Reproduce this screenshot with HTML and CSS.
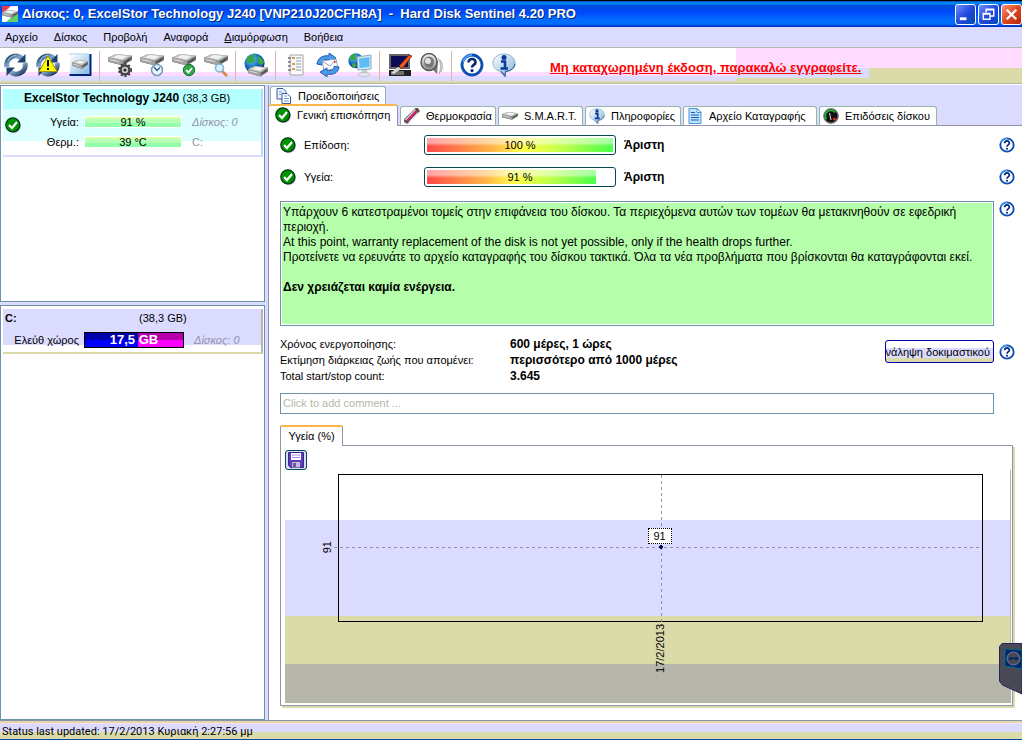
FILE: index.html
```html
<!DOCTYPE html>
<html lang="el">
<head>
    <meta charset="UTF-8">
    <title>Hard Disk Sentinel</title>
    <link rel="stylesheet" href="styles.css">
</head>
<body>
<!-- icons -->
<svg class="defs" width="0" height="0">
    <defs>
        <linearGradient id="steel" x1="0" y1="0" x2="1" y2="1">
            <stop offset="0" stop-color="#1c3f68"/><stop offset=".45" stop-color="#7fa8cc"/><stop offset="1" stop-color="#12294a"/>
        </linearGradient>
        <linearGradient id="metal" x1="0" y1="0" x2="0" y2="1">
            <stop offset="0" stop-color="#f4f4f4"/><stop offset="1" stop-color="#8c8c8c"/>
        </linearGradient>
        <radialGradient id="earth" cx=".35" cy=".3" r=".8">
            <stop offset="0" stop-color="#6cd0ff"/><stop offset=".5" stop-color="#1668c0"/><stop offset="1" stop-color="#062a66"/>
        </radialGradient>
        <linearGradient id="bubble" x1="0" y1="0" x2="1" y2="1">
            <stop offset="0" stop-color="#fff"/><stop offset="1" stop-color="#7fb4dc"/>
        </linearGradient>
        <symbol id="ok" viewBox="0 0 16 16">
            <circle cx="8.8" cy="8.8" r="7" fill="#8a8aa0"/>
            <circle cx="7.8" cy="7.8" r="7" fill="#009200" stroke="#003a10" stroke-width="1.2"/>
            <path d="M4 8l3 3 5-6" fill="none" stroke="#fff" stroke-width="2.2"/>
        </symbol>
        <symbol id="help" viewBox="0 0 24 24">
            <circle cx="12" cy="12" r="10" fill="#fff" stroke="#0b4db0" stroke-width="2.8"/>
            <path d="M3 9a9.5 9.5 0 0 1 9-7" fill="none" stroke="#4aa0ff" stroke-width="2"/>
            <path d="M8.5 9.5c0-5 7.5-4.500 7 0c-.3 2.400-3.500 2.500-3.500 5" fill="none" stroke="#002a7a" stroke-width="2.6"/>
            <circle cx="12" cy="17.600" r="1.600" fill="#002a7a"/>
        </symbol>
        <symbol id="info" viewBox="0 0 24 24">
            <path d="M12 1C5.500 1 1 5 1 10s4 8 8 8.500l4 5 .5-5C19 18 23 15 23 10S18.500 1 12 1z" fill="url(#bubble)" stroke="#8fb0cc"/>
            <path d="M9 18.500l4 4.500.5-4.500c6-.5 9-4 9.300-7.500" fill="none" stroke="#39699a" stroke-width="1.300"/>
            <circle cx="12" cy="4.500" r="2.500" fill="#0a3a9a"/>
            <path d="M9 8.500h4v7M8.500 15.500h7.500" fill="none" stroke="#0a3a9a" stroke-width="2.600"/>
        </symbol>
        <symbol id="drive" viewBox="0 0 24 14" preserveAspectRatio="none">
            <path d="M0 4L8 0l16 2v5l-9 6.500L0 9z" fill="#6f6f6f"/>
            <path d="M0 4L8 0l16 2-9 6z" fill="#c8c8c8"/>
            <path d="M0 4l15 4v5.500L0 9z" fill="#a0a0a0"/>
            <path d="M5 4l5-3 9 1.500-5 3.500z" fill="#f2f2f2"/>
            <path d="M2 6.500l9 2.500" stroke="#ececec"/>
            <path d="M17 9.500l5-3.500" stroke="#4a4a4a" stroke-width="1.500"/>
            <path d="M17 7.500l2-1.500" stroke="#5c6"/>
        </symbol>
        <symbol id="refresh" viewBox="0 0 24 24">
            <path d="M3 14A9 9 0 0 1 17.500 5" fill="none" stroke="url(#steel)" stroke-width="5"/>
            <path d="M21.500 1v8.500H13z" fill="#1d4270"/>
            <path d="M21 10A9 9 0 0 1 6.500 19" fill="none" stroke="url(#steel)" stroke-width="5"/>
            <path d="M2.500 23v-8.500H11z" fill="#1d4270"/>
            <path d="M4 8a9 9 0 0 1 8-5.500" fill="none" stroke="#a8c8e0" stroke-width="1"/>
        </symbol>
        <symbol id="refresh-warn" viewBox="0 0 24 24">
            <use href="#refresh" width="24" height="24"/>
            <path d="M12 3l9 15.500h-18z" fill="#ff0" stroke="#a89400"/>
            <path d="M12 7v6.500M12 15v2" stroke="#000" stroke-width="2"/>
        </symbol>
        <symbol id="drive-panel" viewBox="0 0 24 24">
            <path d="M2 2h20v20H2z" fill="url(#bubble)"/>
            <path d="M1 1h20v20" fill="none" stroke="#9cc8f4"/>
            <path d="M1.500 22h21M22.500 1v22" stroke="#00247c" stroke-width="2"/>
            <use href="#drive" x="4" y="7" width="16" height="9"/>
        </symbol>
        <symbol id="drive-gear" viewBox="0 0 24 24">
            <use href="#drive" x="0" y="1" width="24" height="12"/>
            <circle cx="17" cy="17" r="4.500" fill="#ccc" stroke="#444" stroke-width="2.600"/>
            <circle cx="17" cy="17" r="6.200" fill="none" stroke="#333" stroke-width="1.500" stroke-dasharray="2 2"/>
            <circle cx="17" cy="17" r="1.600" fill="#222"/>
        </symbol>
        <symbol id="drive-clock" viewBox="0 0 24 24">
            <use href="#drive" x="0" y="1" width="24" height="12"/>
            <circle cx="17" cy="17" r="5.500" fill="#eaf6ff" stroke="#7a9cb8" stroke-width="1.600"/>
            <path d="M14 14l3 3.500 3-3" fill="none" stroke="#245a8c" stroke-width="1.300"/>
        </symbol>
        <symbol id="drive-ok" viewBox="0 0 24 24">
            <use href="#drive" x="0" y="1" width="24" height="12"/>
            <circle cx="17" cy="17" r="5.700" fill="#2fa84a" stroke="#1a6b34"/>
            <path d="M14 17l2.500 2.500L20 15" fill="none" stroke="#fff" stroke-width="1.800"/>
        </symbol>
        <symbol id="drive-find" viewBox="0 0 24 24">
            <use href="#drive" x="0" y="1" width="24" height="12"/>
            <path d="M18 18l5 5" stroke="#d98b3a" stroke-width="2.600"/>
            <circle cx="15.500" cy="15" r="4" fill="#d8f0ff" stroke="#7fb0d0" stroke-width="1.500"/>
        </symbol>
        <symbol id="globe" viewBox="0 0 24 24">
            <circle cx="11" cy="11" r="10.500" fill="url(#earth)"/>
            <path d="M3 5c3-4 7-4 9-3l-2 3 2 3-5 3-4-1zM14 3c4 1 6 4 7 7l-3 3-4-3 1-3zM6 14l5 1 1 4-3 2c-3-1-4-4-3-7z" fill="#3aa648"/>
        </symbol>
        <symbol id="globe-drive" viewBox="0 0 24 24">
            <use href="#globe" width="23" height="23"/>
            <use href="#drive" x="4" y="13" width="20" height="11"/>
        </symbol>
        <symbol id="report" viewBox="0 0 24 24">
            <path d="M6 2h13v20H6z" fill="#fafafa" stroke="#a4a4a4"/>
            <path d="M4 5h3M4 9h3M4 13h3M4 17h3" stroke="#777" stroke-width="1.500"/>
            <path d="M8 5h3M8 11h3M8 16h3" stroke="#d0a048" stroke-width="2"/>
            <path d="M12 5h5M12 8h5M12 11h5M12 14h5M12 17h5" stroke="#8f9bb0"/>
        </symbol>
        <symbol id="mail" viewBox="0 0 24 24">
            <path d="M1 11C2 4 8 2 13 3V0l7 5-7 4V6.500C8 6 6 8 6 12z" fill="#4a9cea" stroke="#1c5cae"/>
            <path d="M6 8l14-2 2 9-14 3z" fill="#fff" stroke="#8ca0c0"/>
            <path d="M6 8l8 5 6-7" fill="none" stroke="#8ca0c0"/>
            <path d="M18 8h1.500v2H18z" fill="#d33"/>
            <path d="M23 14c-1 7-7 8-12 7v3l-7-5 7-4v2.500c5 .5 7-1 7-4z" fill="#4a9cea" stroke="#1c5cae"/>
        </symbol>
        <symbol id="network" viewBox="0 0 24 24">
            <use href="#globe" width="17" height="17"/>
            <path d="M9 4l14-2v14l-13 1z" fill="#dcecf6" stroke="#88a8c0"/>
            <path d="M11 5.500l10.500-1.500v10L11.500 15z" fill="#5cbcf4"/>
            <path d="M14 17h5l1 4h-7z" fill="#c8ccd2"/><ellipse cx="16" cy="21.500" rx="6" ry="2" fill="#e6e8ec" stroke="#a8aeb8" stroke-width=".6"/>
        </symbol>
        <symbol id="monitor" viewBox="0 0 24 24">
            <path d="M1 1h21v15H1z" fill="#666"/><path d="M3 3h17v11H3z" fill="#0c0c56"/>
            <path d="M1 17h22v6H1z" fill="#222"/><path d="M3 19h13M3 21h13" stroke="#bbb"/>
            <path d="M3 20l7-6 3 2-7 5z" fill="#d8d8d8"/>
            <path d="M11 13L21 2l3 1-10 13z" fill="#e85820" stroke="#6e1c00" stroke-width=".7"/>
        </symbol>
        <symbol id="speaker" viewBox="0 0 24 24">
            <path d="M18 5c3 4 4 9 1 16M20 7c3 4 3 8 1 12" fill="none" stroke="#b8b8b8" stroke-width="1.300"/>
            <path d="M12 2l6 6-1 13-6-6z" fill="#777"/>
            <ellipse cx="9" cy="9" rx="8" ry="8.500" fill="url(#metal)" stroke="#555" stroke-width="1.400"/>
            <ellipse cx="9" cy="9" rx="5" ry="5.500" fill="#777"/><circle cx="8" cy="8" r="3" fill="#e2e2e2"/>
        </symbol>
        <symbol id="copy" viewBox="0 0 16 16">
            <path d="M1 .5h6l3 3V11H1z" fill="#e8f0ff" stroke="#3a5a9c"/>
            <path d="M6 5.500h5l3.500 3.500v6.500H6z" fill="#fff" stroke="#3a5a9c"/>
            <path d="M8 8h3M8 10.500h5M8 13h5M3 4h3M3 6.500h2" stroke="#6aa0e0"/>
        </symbol>
        <symbol id="thermo" viewBox="0 0 16 16">
            <path d="M3 12.500L12.500 3" stroke="#5c5058" stroke-width="6" stroke-linecap="round"/>
            <path d="M1.500 12L11.500 1.500" stroke="#ddd" stroke-width="1.300"/>
            <path d="M3 13L12.500 3" stroke="#d41c68" stroke-width="2"/>
            <path d="M5 14.500L14.500 4.500" stroke="#eee" stroke-width="1.300"/>
        </symbol>
        <symbol id="smart" viewBox="0 0 16 16">
            <use href="#drive" x="0" y="4" width="16" height="8"/>
        </symbol>
        <symbol id="log" viewBox="0 0 16 16">
            <path d="M2 .5h8l4 4v11H2z" fill="#bfe2ff" stroke="#4a94dc"/>
            <path d="M10 .5v4h4z" fill="#fff" stroke="#4a94dc"/>
            <path d="M4 4.500h4M4 7h8M4 9.500h8M4 12h8" stroke="#1c5cb4"/>
        </symbol>
        <symbol id="dial" viewBox="0 0 16 16">
            <circle cx="8" cy="8" r="7.200" fill="#111" stroke="#777" stroke-width="1.400"/>
            <path d="M3.500 11A5.300 5.300 0 0 1 12 4.500" fill="none" stroke="#18b030" stroke-width="1.800"/>
            <path d="M8 12L6.500 5" stroke="#ddd"/><circle cx="11.500" cy="11" r="1.500" fill="#e22"/>
        </symbol>
        <symbol id="floppy" viewBox="0 0 16 16">
            <path d="M.5.5h15v15h-13l-2-2z" fill="#5d40b8" stroke="#3c2490"/>
            <path d="M3 1h10v7H3z" fill="#fff"/><path d="M4 3h8M4 5.500h8" stroke="#a48ce8"/>
            <path d="M4 10h8v5.500H4z" fill="#c4b8dc"/><path d="M5 11h3v4H5z" fill="#6a5c90"/>
        </symbol>
    </defs>
</svg>

<div class="app">
    <header class="titlebar">
        <svg class="logo" viewBox="0 0 16 16">
            <path d="M0 0h16v16H0z" fill="#fff"/><path d="M0 0h9L0 8z" fill="#e04050"/><path d="M16 6v10H4z" fill="#60d060"/>
            <use href="#drive" x="0" y="4" width="16" height="8"/>
        </svg>
        <h1>Δίσκος: 0, ExcelStor Technology J240 [VNP210J20CFH8A] &nbsp;-&nbsp; Hard Disk Sentinel 4.20 PRO</h1>
        <div class="window-buttons">
            <button aria-label="Minimize"><svg viewBox="0 0 20 20"><path d="M4 13h7v3H4z" fill="#fff"/></svg></button>
            <button aria-label="Restore"><svg viewBox="0 0 20 20"><path d="M7.500 8V4.500h8v7H12M7 5h9" fill="none" stroke="#fff" stroke-width="1.500"/><path d="M4.500 9h7v6h-7zM4 9.500h8" fill="none" stroke="#fff" stroke-width="1.500"/></svg></button>
            <button class="close" aria-label="Close"><svg viewBox="0 0 20 20"><path d="M5 5l10 10M15 5L5 15" stroke="#fff" stroke-width="2.400"/></svg></button>
        </div>
    </header>

    <nav class="menu">
        <button>Αρχείο</button>
        <button>Δίσκος</button>
        <button>Προβολή</button>
        <button>Αναφορά</button>
        <button><u>Δ</u>ιαμόρφωση</button>
        <button>Βοήθεια</button>
    </nav>

    <div class="toolbar">
        <button aria-label="Refresh"><svg><use href="#refresh"/></svg></button>
        <button aria-label="Refresh all"><svg><use href="#refresh-warn"/></svg></button>
        <button aria-label="Disk panel"><svg><use href="#drive-panel"/></svg></button>
        <span class="sep"></span>
        <button aria-label="Disk settings"><svg><use href="#drive-gear"/></svg></button>
        <button aria-label="Short test"><svg><use href="#drive-clock"/></svg></button>
        <button aria-label="Extended test"><svg><use href="#drive-ok"/></svg></button>
        <button aria-label="Surface test"><svg><use href="#drive-find"/></svg></button>
        <span class="sep"></span>
        <button aria-label="Online"><svg><use href="#globe-drive"/></svg></button>
        <span class="sep"></span>
        <button aria-label="Report"><svg><use href="#report"/></svg></button>
        <button aria-label="Send report"><svg><use href="#mail"/></svg></button>
        <button aria-label="Network"><svg><use href="#network"/></svg></button>
        <span class="sep"></span>
        <button aria-label="Configuration"><svg><use href="#monitor"/></svg></button>
        <button aria-label="Sound"><svg><use href="#speaker"/></svg></button>
        <span class="sep"></span>
        <button aria-label="Help"><svg><use href="#help"/></svg></button>
        <button aria-label="About"><svg><use href="#info"/></svg></button>
        <a class="register" href="#">Μη καταχωρημένη έκδοση, παρακαλώ εγγραφείτε.</a>
    </div>

    <div class="main">
        <aside class="sidebar">
            <section class="list disks">
                <div class="disk">
                    <h2>ExcelStor Technology J240 <span>(38,3 GB)</span></h2>
                    <div class="disk-body">
                        <svg class="icon"><use href="#ok"/></svg>
                        <span class="name">Υγεία:</span><span class="bar">91 %</span><i>Δίσκος: 0</i>
                        <span class="name">Θερμ.:</span><span class="bar">39 °C</span><b>C:</b>
                    </div>
                </div>
            </section>
            <section class="list drives">
                <div class="drive">
                    <div class="drive-head"><b>C:</b><span>(38,3 GB)</span></div>
                    <div class="drive-body"><span class="name">Ελεύθ χώρος</span><span class="space">17,5 GB</span><i>Δίσκος: 0</i></div>
                </div>
            </section>
        </aside>

        <main class="content">
            <div class="tabs tabs-top">
                <button class="tab alerts"><svg class="icon"><use href="#copy"/></svg>Προειδοποιήσεις</button>
            </div>
            <div class="tabs">
                <button class="tab current"><svg class="icon"><use href="#ok"/></svg>Γενική επισκόπηση</button>
                <button class="tab temp"><svg class="icon"><use href="#thermo"/></svg>Θερμοκρασία</button>
                <button class="tab smart"><svg class="icon"><use href="#smart"/></svg>S.M.A.R.T.</button>
                <button class="tab temp"><svg class="icon"><use href="#info"/></svg>Πληροφορίες</button>
                <button class="tab log"><svg class="icon"><use href="#log"/></svg>Αρχείο Καταγραφής</button>
                <button class="tab perf"><svg class="icon"><use href="#dial"/></svg>Επιδόσεις δίσκου</button>
            </div>

            <div class="page">
                <div class="rating">
                    <svg class="icon"><use href="#ok"/></svg>
                    <span class="rating-name">Επίδοση:</span>
                    <div class="gauge"><div class="fill" style="width: 100%"></div><span>100 %</span></div>
                    <b>Άριστη</b>
                    <button class="help" aria-label="Help"><svg class="icon"><use href="#help"/></svg></button>
                </div>
                <div class="rating">
                    <svg class="icon"><use href="#ok"/></svg>
                    <span class="rating-name">Υγεία:</span>
                    <div class="gauge"><div class="fill" style="width: 91%"></div><span>91 %</span></div>
                    <b>Άριστη</b>
                    <button class="help" aria-label="Help"><svg class="icon"><use href="#help"/></svg></button>
                </div>

                <div class="row">
                    <div class="message">
                        <p>Υπάρχουν 6 κατεστραμένοι τομείς στην επιφάνεια του δίσκου. Τα περιεχόμενα αυτών των τομέων θα μετακινηθούν σε εφεδρική περιοχή.</p>
                        <p>At this point, warranty replacement of the disk is not yet possible, only if the health drops further.</p>
                        <p>Προτείνετε να ερευνάτε το αρχείο καταγραφής του δίσκου τακτικά. Όλα τα νέα προβλήματα που βρίσκονται θα καταγράφονται εκεί.</p>
                        <p class="action">Δεν χρειάζεται καμία ενέργεια.</p>
                    </div>
                    <button class="help" aria-label="Help"><svg class="icon"><use href="#help"/></svg></button>
                </div>

                <div class="row facts-row">
                    <dl class="facts">
                        <dt>Χρόνος ενεργοποίησης:</dt><dd>600 μέρες, 1 ώρες</dd>
                        <dt>Εκτίμηση διάρκειας ζωής που απομένει:</dt><dd>περισσότερο από 1000 μέρες</dd>
                        <dt>Total start/stop count:</dt><dd>3.645</dd>
                    </dl>
                    <div class="test">
                        <button class="repeat"><span>νάληψη δοκιμαστικού</span></button>
                        <button class="help" aria-label="Help"><svg class="icon"><use href="#help"/></svg></button>
                    </div>
                </div>

                <input class="comment" type="text" aria-label="Comment" placeholder="Click to add comment ...">

                <button class="chart-tab">Υγεία (%)</button>
                <div class="chart">
                    <button class="save" aria-label="Save"><svg class="icon"><use href="#floppy"/></svg></button>
                    <div class="graph">
                        <div class="plot">
                            <div class="line-x"></div>
                            <div class="line-y"></div>
                            <span class="label-y">91</span>
                            <span class="label-x">17/2/2013</span>
                            <span class="value">91</span>
                            <span class="point"></span>
                        </div>
                    </div>
                </div>
            </div>
        </main>
    </div>

    <footer class="status">Status last updated: 17/2/2013 Κυριακή 2:27:56 μμ</footer>
</div>

<svg class="side-tab" viewBox="0 0 23 52">
    <path d="M23 .5H3l-2.500 3V38l3 4L23 51z" fill="#494955" stroke="#24245c"/>
    <path d="M6 6l17 1v19L6 23z" fill="#00246d" stroke="#006d80"/>
    <circle cx="14.500" cy="15.500" r="6.500" fill="#494955" stroke="#6d7c92"/>
    <path d="M9.500 15.500l3-2v1.300h4v-1.300l3 2-3 2v-1.300h-4v1.300z" fill="#00246d"/>
</svg>
</body>
</html>
```
FILE: styles.css
```css
* {
    box-sizing: border-box;
    margin: 0;
    padding: 0;
}

body {
    font: 11px/16px "Liberation Sans", Arial, sans-serif;
    color: #000;
    background: #dbdbff;
}

button {
    border: 0;
    background: none;
    font: inherit;
    color: inherit;
}

.defs {
    position: absolute;
}

.icon {
    width: 16px;
    height: 16px;
    flex: none;
}

.app {
    display: flex;
    flex-direction: column;
    min-height: 100vh;
}

/* title */
.titlebar {
    display: flex;
    align-items: center;
    gap: 4px;
    height: 27px;
    padding-left: 2px;
    border-top: 1px solid #000;
    background: linear-gradient(#0049b6 0, #0092ff 2px, #0049db 5px, #0049ff 12px, #006dff 18px, #006dff 23px, #0024b6 26px);
    color: #fff;
}

.logo {
    width: 16px;
    height: 18px;
}

.titlebar h1 {
    flex: 1;
    font: bold 13px/20px "Liberation Sans", Arial, sans-serif;
    text-shadow: 1px 1px #00246d;
    white-space: nowrap;
}

.window-buttons {
    display: flex;
    gap: 2px;
}

.window-buttons button {
    width: 21px;
    height: 21px;
    border: 1px solid #fff;
    border-radius: 3px;
    background: linear-gradient(135deg, #6d92ff, #2449db 50%, #0049b6);
}

.window-buttons .close {
    background: linear-gradient(135deg, #ff9270, #db4924 50%, #b62400);
}

.window-buttons svg {
    display: block;
    width: 19px;
    height: 19px;
}

/* menu */
.menu {
    display: flex;
    gap: 16px;
    height: 20px;
    padding-left: 5px;
}

/* toolbar */
.toolbar {
    display: flex;
    align-items: center;
    height: 38px;
    border-top: 1px solid #b6b6aa;
    border-bottom: 1px solid #fff;
    background:
        linear-gradient(#ffdbff 20px, #dbdbaa 20px, #dbdbaa 35px, #b6b6aa 35px) right / 15% 100% no-repeat,
        linear-gradient(#ffdbff 20px, #dbdbff 20px, #dbdbff 30px, #dbdbaa 30px, #dbdbaa 35px, #b6b6aa 35px) right / 28% 100% no-repeat,
        linear-gradient(#fff 24px, #ffdbff 24px, #ffdbff 28px, #dbdbff 28px, #dbdbff 33px, #dbdbaa 33px, #dbdbaa 35px, #b6b6aa 35px);
}

.toolbar button {
    width: 32px;
    height: 32px;
    padding: 3px 4px 5px;
}

.toolbar button svg {
    display: block;
    width: 24px;
    height: 24px;
}

.sep {
    width: 8px;
    height: 30px;
    background: linear-gradient(#dbb6aa, #dbb6aa) 3px 0 / 1px 100% no-repeat;
}

.register {
    margin-left: 30px;
    padding-top: 3px;
    font: bold 13px/20px "Liberation Sans", Arial, sans-serif;
    color: #f00;
    white-space: nowrap;
}

/* left side */
.main {
    flex: 1;
    display: flex;
    gap: 3px;
}

.sidebar {
    width: 265px;
    flex: none;
    display: flex;
    flex-direction: column;
    gap: 3px;
}

.list {
    padding: 3px 1px 3px 2px;
    border: 1px solid #6d92aa;
    background: #fff;
}

.disks {
    height: 217px;
}

.drives {
    flex: 1;
}

.sidebar i,
.disk-body b {
    color: #9292aa;
    font-weight: normal;
}

.disk {
    border-right: 2px solid #b6dbff;
    border-bottom: 2px solid #dbdbff;
    background: linear-gradient(#b6ffff 20px, #dbffff 20px, #dbffff 52px, #fff 52px);
}

.disk h2 {
    height: 20px;
    padding-left: 21px;
    font: bold 12px/18px "Liberation Sans", Arial, sans-serif;
    white-space: nowrap;
}

.disk h2 span {
    font-size: 11px;
    font-weight: normal;
}

.disk-body {
    display: grid;
    grid-template-columns: 16px 53px 98px 1fr;
    grid-template-rows: 20px 20px;
    align-items: center;
    column-gap: 5px;
    padding: 3px 0 3px 2px;
}

.disk-body .icon {
    grid-row: 1 / 3;
    align-self: start;
    margin-top: 5px;
}

.name {
    text-align: right;
    white-space: nowrap;
}

.sidebar i,
.disk-body b {
    padding-left: 5px;
}

.bar {
    height: 12px;
    border: 1px solid #fff;
    background: linear-gradient(#dbffaa 2px, #b6ffb6 2px, #b6ffb6 6px, #92ffaa 6px);
    line-height: 10px;
    text-align: center;
}

.drive {
    border-right: 2px solid #b6b6aa;
    border-bottom: 2px solid #dbdbaa;
    background: linear-gradient(#dbdbff 36px, #fff 36px);
}

.drive-head {
    display: grid;
    grid-template-columns: 134px 1fr;
    padding: 1px 2px;
}

.drive-body {
    display: grid;
    grid-template-columns: 76px 100px 1fr;
    align-items: center;
    column-gap: 5px;
    height: 25px;
}

.space {
    height: 16px;
    border: 1px solid #000;
    background:
        linear-gradient(90deg, #00a 54%, #b600aa 54%) 0 0 / 100% 7px no-repeat,
        linear-gradient(90deg, #00f 54%, #f0f 54%);
    color: #fff;
    font: bold 13px/14px "Liberation Sans", Arial, sans-serif;
    text-align: center;
}

/* tabs */
.content {
    flex: 1;
    min-width: 0;
    display: flex;
    flex-direction: column;
    border-left: 1px solid #9292aa;
}

.tabs {
    display: flex;
    align-items: flex-end;
    gap: 2px;
    height: 22px;
    background: linear-gradient(#9292aa, #9292aa) 0 100% / 100% 1px no-repeat;
}

.tabs-top {
    height: 19px;
    padding-left: 1px;
    background: none;
}

.tab {
    display: flex;
    align-items: center;
    gap: 6px;
    height: 20px;
    padding: 0 3px;
    border: 1px solid #92b6aa;
    border-bottom-color: #9292aa;
    border-radius: 3px 3px 0 0;
    background: #fff;
    white-space: nowrap;
}

.alerts {
    width: 116px;
    height: 18px;
    padding-left: 5px;
    border-bottom: 0;
}

.tab.current {
    width: 129px;
    height: 22px;
    padding: 0 6px 2px;
    border: 0;
    border-top: 2px solid #ffb649;
    border-right: 1px solid #9292aa;
}

.temp {
    width: 96px;
}

.smart {
    width: 85px;
}

.log {
    width: 134px;
}

.perf {
    width: 118px;
}

/* page */
.page {
    flex: 1;
    display: flex;
    flex-direction: column;
    padding: 3px 0 14px 11px;
    background: #fff;
}

.rating {
    display: flex;
    align-items: center;
    height: 32px;
}

.rating-name {
    width: 128px;
    padding-left: 8px;
}

.gauge {
    position: relative;
    width: 192px;
    height: 20px;
    margin-right: 8px;
    padding: 2px;
    border: 1px solid #004955;
    border-radius: 3px;
}

.fill {
    height: 14px;
    background:
        linear-gradient(rgba(255, 255, 255, .5) 5px, transparent 8px),
        linear-gradient(90deg, #ff4949, #ffb649 35%, #ffff49 52%, #b6ff49 75%, #49ff49);
}

.gauge span {
    position: absolute;
    inset: 0;
    line-height: 18px;
    text-align: center;
}

.rating b,
.facts dd {
    font-size: 12px;
    font-weight: bold;
}

.help {
    width: 28px;
    height: 16px;
    padding-left: 5px;
    flex: none;
    text-align: left;
}

.help .icon {
    display: block;
}

.rating .help {
    margin-left: auto;
}

.row {
    display: flex;
}

.message {
    flex: 1;
    height: 125px;
    margin-top: 8px;
    padding: 3px 2px;
    border: 1px solid #6d92aa;
    box-shadow: inset 0 0 0 1px #fff;
    background: #b6ffaa;
    font-size: 12px;
    line-height: 15px;
}

.message + .help {
    margin-top: 8px;
}

.action {
    margin-top: 15px;
    font-weight: bold;
}

.facts-row {
    align-items: flex-start;
    margin-top: 10px;
}

.facts {
    flex: 1;
    display: grid;
    grid-template-columns: 230px 1fr;
}

.test {
    display: flex;
    align-items: center;
    padding-top: 4px;
}

.repeat {
    display: flex;
    justify-content: flex-end;
    align-items: center;
    width: 109px;
    height: 23px;
    padding-right: 3px;
    border: 1px solid #0000aa;
    border-radius: 3px;
    background: linear-gradient(#fff 7px, #dbdbff 7px, #dbdbff 17px, #dbdbaa 17px);
    overflow: hidden;
    white-space: nowrap;
}

.comment {
    height: 21px;
    margin: 9px 28px 11px 0;
    padding: 0 2px 2px;
    border: 1px solid #6d92aa;
    font: inherit;
}

.comment::placeholder {
    color: #b6b6aa;
}

/* chart */
.chart-tab {
    align-self: flex-start;
    z-index: 1;
    width: 63px;
    height: 21px;
    margin-bottom: -1px;
    padding-bottom: 2px;
    border: 1px solid #9292aa;
    border-top: 2px solid #ffb649;
    border-bottom: 0;
    border-radius: 2px 2px 0 0;
    background: #fff;
}

.chart {
    flex: 1;
    display: flex;
    flex-direction: column;
    margin-right: 9px;
    padding: 4px 1px 2px 4px;
    border: 1px solid #9292aa;
    box-shadow: 2px 2px #dbdbaa;
}

.save {
    display: flex;
    align-items: center;
    justify-content: center;
    width: 22px;
    height: 20px;
    border: 1px solid #004955;
    border-radius: 3px;
    background: #dbdbff;
}

.graph {
    flex: 1;
    display: flex;
    padding: 4px 27px 81px 53px;
    border-right: 1px solid #b6b6aa;
    background: linear-gradient(#fff 50px, #dbdbff 50px, #dbdbff 146px, #dbdbaa 146px, #dbdbaa 194px, #b6b6aa 194px);
}

.plot {
    flex: 1;
    position: relative;
    border: 1px solid #000;
}

.line-x,
.line-y {
    position: absolute;
}

.line-x {
    top: 49%;
    left: -5px;
    right: 0;
    height: 1px;
    background: repeating-linear-gradient(90deg, #9292aa 0 3px, transparent 3px 6px);
}

.line-y {
    top: 0;
    bottom: -5px;
    left: 50%;
    width: 1px;
    background: repeating-linear-gradient(#9292aa 0 3px, transparent 3px 6px);
}

.label-x,
.label-y {
    position: absolute;
    line-height: 12px;
    writing-mode: vertical-rl;
    transform: rotate(180deg);
}

.label-x {
    top: 100%;
    left: 50%;
    margin: 3px 0 0 -7px;
}

.label-y {
    top: 49%;
    left: -18px;
    margin-top: -6px;
}

.value {
    position: absolute;
    top: 49%;
    left: 50%;
    width: 24px;
    height: 16px;
    margin: -19px 0 0 -13px;
    border: 1px dotted #000;
    background: #fff;
    line-height: 15px;
    text-align: center;
}

.point {
    position: absolute;
    top: 49%;
    left: 50%;
    width: 4px;
    height: 4px;
    margin: -2px 0 0 -2px;
    border: 1px solid #000;
    border-radius: 2px;
    background: #00f;
}

/* status bar */
.status {
    height: 20px;
    padding: 4px 2px 0;
    border-top: 1px solid #9292aa;
    border-bottom: 1px solid #00499a;
    background: linear-gradient(#dbdbaa 2px, #ffdbff 2px, #ffdbff 3px, #dbdbff 3px, #dbdbff 11px, #dbdbaa 11px);
    font-family: Roboto, sans-serif;
    line-height: 14px;
}

.side-tab {
    position: fixed;
    right: 0;
    top: 643px;
    width: 23px;
    height: 52px;
}
```
